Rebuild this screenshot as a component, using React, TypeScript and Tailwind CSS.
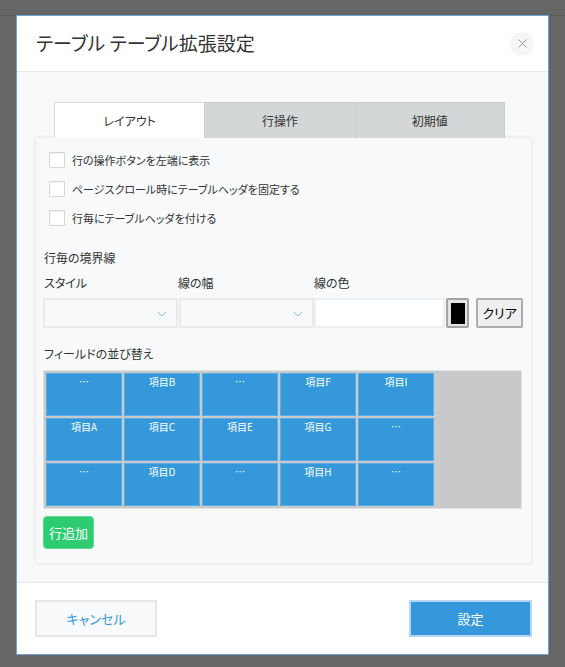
import React from "react";

const font = { fontFamily: '"Noto Sans CJK JP", "Noto Sans", sans-serif' };

const rows: string[][] = [
  ["…", "項目B", "…", "項目F", "項目I"],
  ["項目A", "項目C", "項目E", "項目G", "…"],
  ["…", "項目D", "…", "項目H", "…"],
];

function Chevron() {
  return (
    <svg width="10" height="6" viewBox="0 0 10 6" className="absolute right-[9px] top-[11px]">
      <path d="M1 1 L5 5 L9 1" fill="none" stroke="#7fb6e3" strokeWidth="1" />
    </svg>
  );
}

function Checkbox({ label }: { label: string }) {
  return (
    <div className="flex items-center h-[16px] ml-[6px]">
      <div className="w-[16px] h-[16px] bg-white border border-[#d6d6d6] rounded-[1px] shadow-[inset_0_1px_1px_rgba(0,0,0,0.05)]" />
      <span className="ml-[7px] text-[11px] text-[#333] [font-feature-settings:'palt'] leading-none">{label}</span>
    </div>
  );
}

export default function App() {
  return (
    <div className="w-[565px] h-[667px] bg-[#666666] overflow-hidden flex flex-col" style={font}>
      <div className="h-[15px] shrink-0" />
      <div className="h-px bg-[#5c5c5c] shrink-0" />
      <div className="ml-[16px] -mt-px w-[533px] h-[640px] border border-[#6ea2d1] bg-white flex flex-col shrink-0">
        {/* header */}
        <div className="h-[56px] shrink-0 border-b border-[#e8eaeb] flex items-center justify-between pl-[19px] pr-[14px]">
          <div className="text-[19px] text-[#333] [font-feature-settings:'palt']">テーブル テーブル拡張設定</div>
          <div className="w-[24px] h-[24px] rounded-full bg-[#f5f6f8] flex items-center justify-center">
            <svg width="9" height="9" viewBox="0 0 9 9">
              <path d="M0.5 0.5 L8.5 8.5 M8.5 0.5 L0.5 8.5" stroke="#9a9a9a" strokeWidth="1" />
            </svg>
          </div>
        </div>
        {/* body */}
        <div className="flex-1 bg-[#f7f9fa] px-[19px] pt-[30px]">
          <div className="ml-[18px] w-[451px] h-[36px] grid grid-cols-3 text-[12px] text-[#333] [font-feature-settings:'palt']">
            <div className="bg-white border-t border-l border-[#d9dbdc] flex items-center justify-center">レイアウト</div>
            <div className="bg-[#d4d7d8] border-t border-l border-[#cacdce] flex items-center justify-center">行操作</div>
            <div className="bg-[#d4d7d8] border-t border-l border-r border-[#cacdce] flex items-center justify-center">初期値</div>
          </div>
          <div className="w-[495px] h-[425px] bg-[#f7f9fa] shadow-[0_0_4px_rgba(0,0,0,0.13)] px-[7px] pt-[14px]">
            <div className="flex flex-col gap-[13px]">
              <Checkbox label="行の操作ボタンを左端に表示" />
              <Checkbox label="ページスクロール時にテーブルヘッダを固定する" />
              <Checkbox label="行毎にテーブルヘッダを付ける" />
            </div>
            <div className="mt-[24px] ml-[1px] text-[12px] text-[#333] [font-feature-settings:'palt'] leading-[16px]">行毎の境界線</div>
            <div className="mt-[9px] flex text-[12px] text-[#333] [font-feature-settings:'palt'] leading-[16px]">
              <div className="w-[135px] pl-[1px]">スタイル</div>
              <div className="w-[136px]">線の幅</div>
              <div>線の色</div>
            </div>
            <div className="mt-[7px] flex items-center h-[30px]">
              <div className="relative w-[135px] h-[30px] border-2 border-[#e8eaeb] bg-[#f7f9fa]">
                <Chevron />
              </div>
              <div className="relative ml-px w-[135px] h-[30px] border-2 border-[#e8eaeb] bg-[#f7f9fa]">
                <Chevron />
              </div>
              <div className="w-[131px] h-[30px] border-2 border-[#eceeef] bg-white" />
              <div className="ml-[1px] w-[23px] h-[30px] border-2 border-[#a3a3a3] rounded-[2px] bg-[#e4e4e4] flex items-center justify-center">
                <div className="w-[14px] h-[21px] bg-black" />
              </div>
              <div className="ml-[7px] w-[47px] h-[30px] border-2 border-[#adadad] rounded-[2px] bg-[#efefef] flex items-center justify-center text-[13px] text-black [font-feature-settings:'palt']">クリア</div>
            </div>
            <div className="mt-[18px] ml-[1px] text-[12px] text-[#333] [font-feature-settings:'palt'] leading-[16px]">フィールドの並び替え</div>
            <div className="mt-[8px] w-[479px] border border-[#e2e3e4] bg-[#c8c9ca] p-px flex flex-col">
              {rows.map((r, i) => (
                <div key={i} className="flex">
                  {r.map((c, j) => (
                    <div
                      key={j}
                      className="m-px w-[76px] h-[43px] bg-[#3498db] border border-[#5aabe6] text-white text-[10px] leading-[12px] text-center pt-[2px]"
                    >
                      {c}
                    </div>
                  ))}
                </div>
              ))}
            </div>
            <div className="mt-[7px] w-[51px] h-[33px] bg-[#2ecc71] border border-[#5fd892] rounded-[4px] flex items-center justify-center text-white text-[13px] [font-feature-settings:'palt']">行追加</div>
          </div>
        </div>
        {/* footer */}
        <div className="h-[72px] shrink-0 bg-white border-t border-[#e3e7e8] flex items-start justify-between pt-[17px] pl-[18px] pr-[16px]">
          <div className="w-[122px] h-[37px] bg-[#f7f9fa] border-2 border-[#e3e7e8] flex items-center justify-center text-[13px] text-[#3498db] [font-feature-settings:'palt']">キャンセル</div>
          <div className="w-[123px] h-[37px] bg-[#3498db] border-2 border-[#b5d6ee] flex items-center justify-center text-[13px] text-white [font-feature-settings:'palt']">設定</div>
        </div>
      </div>
    </div>
  );
}
